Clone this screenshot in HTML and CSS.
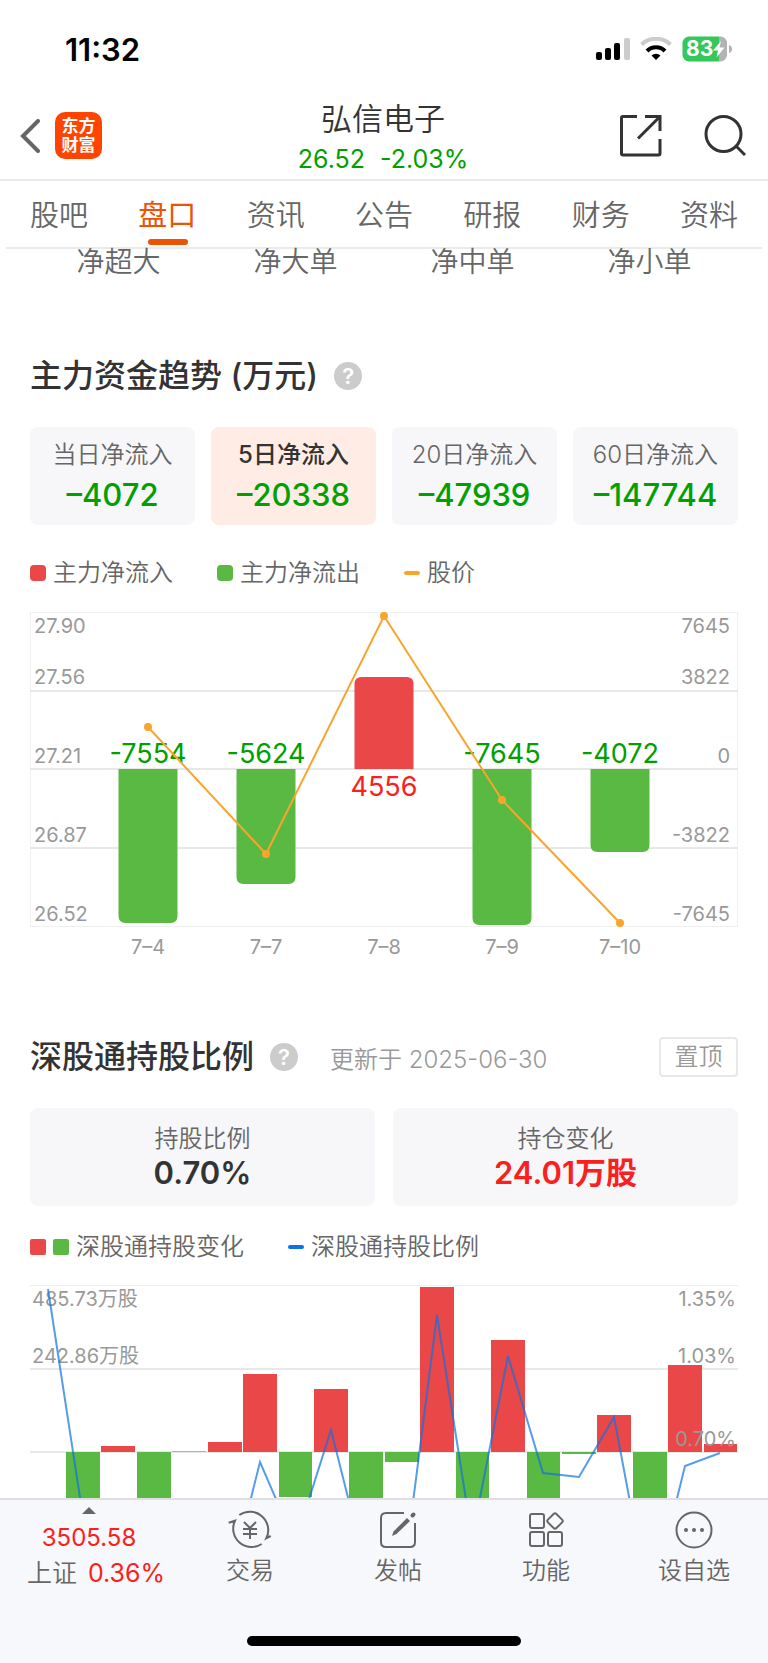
FILE: index.html
```html
<!DOCTYPE html>
<html lang="zh-CN">
<head>
    <meta charset="UTF-8">
    <meta name="viewport" content="width=device-width, initial-scale=1.0">
    <title>弘信电子</title>
    <link rel="stylesheet" href="styles.css">
</head>
<body>
    <div class="status-bar">
        <span class="time">11:32</span>
        <div class="status-icons">
            <svg width="34" height="24" viewBox="0 0 34 24">
                <rect x="0" y="15" width="6" height="8" rx="2"/>
                <rect x="9" y="11" width="6" height="12" rx="2"/>
                <rect x="18" y="6" width="6" height="17" rx="2"/>
                <rect x="28" y="1" width="6" height="22" rx="2" fill="#ccc"/>
            </svg>
            <svg width="32" height="24" viewBox="0 0 32 24" fill="none" stroke-width="4">
                <path d="M1.500 7.500 A21 21 0 0 1 30.500 7.500" stroke="#ccc"/>
                <path d="M7 14 A12.500 12.500 0 0 1 25 14" stroke="#000"/>
                <path d="M16 23 L11.500 18.500 A6.500 6.500 0 0 1 20.500 18.500 Z" fill="#000"/>
            </svg>
            <svg width="50" height="26" viewBox="0 0 50 26">
                <path d="M7 0.500 H37 V25.500 H7 A6.500 6.500 0 0 1 0.500 19 V7 A6.500 6.500 0 0 1 7 0.500 Z" fill="#34c759"/>
                <path d="M37 0.500 H38.500 A6.500 6.500 0 0 1 45 7 V19 A6.500 6.500 0 0 1 38.500 25.500 H37 Z" fill="#b3b3b3"/>
                <path d="M47 9 Q50 10 50 13 Q50 16 47 17 Z" fill="#b3b3b3"/>
                <text x="4" y="20" class="battery-text">83</text>
                <path d="M39 5 L31 14.500 H36 L34.500 21.500 L42.500 11.500 H37.500 Z" fill="#fff"/>
            </svg>
        </div>
    </div>

    <header class="header">
        <div class="header-left">
            <button class="icon-btn" aria-label="返回">
                <svg width="20" height="34" viewBox="0 0 20 34" fill="none" stroke="#666" stroke-width="4" stroke-linecap="round">
                    <path d="M18 2 L3 17 L18 32"/>
                </svg>
            </button>
            <a href="#" class="logo"><span>东方</span><span>财富</span></a>
        </div>
        <div class="stock">
            <h1>弘信电子</h1>
            <div class="quote"><span>26.52</span><span>-2.03%</span></div>
        </div>
        <div class="header-right">
            <button class="icon-btn" aria-label="分享">
                <svg width="42" height="42" viewBox="0 0 42 42" fill="none" stroke="#333" stroke-width="3">
                    <path d="M17 1.500 H3 Q1.500 1.500 1.500 3 V38.500 Q1.500 40 3 40 H38.500 Q40 40 40 38.500 V24"/>
                    <path d="M25 1.500 H40 V16"/>
                    <path d="M40 1.500 L18 23.500"/>
                </svg>
            </button>
            <button class="icon-btn" aria-label="搜索">
                <svg width="42" height="42" viewBox="0 0 42 42" fill="none" stroke="#333" stroke-width="3">
                    <circle cx="19.500" cy="19" r="17.500"/>
                    <path d="M32 31 L41 40"/>
                </svg>
            </button>
        </div>
    </header>

    <nav class="tabs">
        <a href="#">股吧</a>
        <a href="#" class="active">盘口</a>
        <a href="#">资讯</a>
        <a href="#">公告</a>
        <a href="#">研报</a>
        <a href="#">财务</a>
        <a href="#">资料</a>
    </nav>

    <div class="order-types">
        <span>净超大</span>
        <span>净大单</span>
        <span>净中单</span>
        <span>净小单</span>
    </div>

    <main class="content">
        <section class="trend">
            <div class="section-title">
                <h2>主力资金趋势 (万元)</h2>
                <button class="help" aria-label="说明">?</button>
            </div>
            <div class="periods">
                <button class="period"><span>当日净流入</span><b>–4072</b></button>
                <button class="period active"><span>5日净流入</span><b>–20338</b></button>
                <button class="period"><span>20日净流入</span><b>–47939</b></button>
                <button class="period"><span>60日净流入</span><b>–147744</b></button>
            </div>
            <div class="legend">
                <span class="legend-item"><i class="swatch round red"></i>主力净流入</span>
                <span class="legend-item"><i class="swatch round green"></i>主力净流出</span>
                <span class="legend-item"><i class="dash orange"></i>股价</span>
            </div>
            <svg class="chart" viewBox="0 0 708 350">
                <g class="frame">
                    <path d="M0.500 0 V314 M707.500 0 V314"/>
                    <path d="M0 0.500 H708 M0 314.500 H708"/>
                </g>
                <g class="grid">
                    <path d="M0 79 H708 M0 157 H708 M0 236 H708"/>
                </g>
                <g class="bar-down">
                    <path d="M88.500 157 H147.500 V304 Q147.500 311 140.500 311 H95.500 Q88.500 311 88.500 304 Z"/>
                    <path d="M206.500 157 H265.500 V265 Q265.500 272 258.500 272 H213.500 Q206.500 272 206.500 265 Z"/>
                    <path d="M442.500 157 H501.500 V306 Q501.500 313 494.500 313 H449.500 Q442.500 313 442.500 306 Z"/>
                    <path d="M560.500 157 H619.500 V233 Q619.500 240 612.500 240 H567.500 Q560.500 240 560.500 233 Z"/>
                </g>
                <path class="bar-up" d="M324.500 157 V72 Q324.500 65 331.500 65 H376.500 Q383.500 65 383.500 72 V157 Z"/>
                <g class="axis">
                    <text x="4" y="21">27.90</text>
                    <text x="4" y="72">27.56</text>
                    <text x="4" y="151">27.21</text>
                    <text x="4" y="230">26.87</text>
                    <text x="4" y="309">26.52</text>
                </g>
                <g class="axis end">
                    <text x="700" y="21">7645</text>
                    <text x="700" y="72">3822</text>
                    <text x="700" y="151">0</text>
                    <text x="700" y="230">-3822</text>
                    <text x="700" y="309">-7645</text>
                </g>
                <g class="axis middle">
                    <text x="118" y="342">7–4</text>
                    <text x="236" y="342">7–7</text>
                    <text x="354" y="342">7–8</text>
                    <text x="472" y="342">7–9</text>
                    <text x="590" y="342">7–10</text>
                </g>
                <g class="value">
                    <text x="118" y="151">-7554</text>
                    <text x="236" y="151">-5624</text>
                    <text x="354" y="184" class="up">4556</text>
                    <text x="472" y="151">-7645</text>
                    <text x="590" y="151">-4072</text>
                </g>
                <polyline class="price-line" points="118,115 236,242 354,4 472,188 590,311"/>
                <g fill="#f9a52b">
                    <circle cx="118" cy="115" r="4"/>
                    <circle cx="236" cy="242" r="4"/>
                    <circle cx="354" cy="4" r="4"/>
                    <circle cx="472" cy="188" r="4"/>
                    <circle cx="590" cy="311" r="4"/>
                </g>
            </svg>
        </section>

        <section class="holding">
            <div class="section-title">
                <h2>深股通持股比例</h2>
                <button class="help" aria-label="说明">?</button>
                <span class="updated">更新于 2025-06-30</span>
                <button class="pin">置顶</button>
            </div>
            <div class="stats">
                <div class="stat"><span>持股比例</span><b>0.70%</b></div>
                <div class="stat"><span>持仓变化</span><b class="up">24.01万股</b></div>
            </div>
            <div class="legend">
                <span class="legend-item"><i class="swatch red"></i><i class="swatch green"></i>深股通持股变化</span>
                <span class="legend-item"><i class="dash blue"></i>深股通持股比例</span>
            </div>
            <svg class="chart" viewBox="0 0 708 335">
                <g class="frame">
                    <path d="M0 0.500 H708 M0 334 H708"/>
                </g>
                <g class="grid">
                    <path d="M0 84 H708 M0 167 H708 M0 251 H708"/>
                </g>
                <g class="bar-down">
                    <rect x="36" y="167" width="34" height="130"/>
                    <rect x="107" y="167" width="34" height="110"/>
                    <rect x="249" y="167" width="33" height="45"/>
                    <rect x="319" y="167" width="34" height="120"/>
                    <rect x="355" y="167" width="34" height="10"/>
                    <rect x="426" y="167" width="33" height="90"/>
                    <rect x="497" y="167" width="33" height="70"/>
                    <rect x="532" y="167" width="34" height="2"/>
                    <rect x="603" y="167" width="34" height="140"/>
                </g>
                <g class="bar-up">
                    <rect x="71" y="161" width="34" height="6"/>
                    <rect x="142" y="166" width="34" height="1" opacity="0.500"/>
                    <rect x="178" y="157" width="34" height="10"/>
                    <rect x="213" y="89" width="34" height="78"/>
                    <rect x="284" y="104" width="34" height="63"/>
                    <rect x="390" y="2" width="34" height="165"/>
                    <rect x="461" y="55" width="34" height="112"/>
                    <rect x="567" y="130" width="34" height="37"/>
                    <rect x="638" y="80" width="34" height="87"/>
                    <rect x="674" y="159" width="33" height="8"/>
                </g>
                <g class="axis">
                    <text x="2" y="21">485.73万股</text>
                    <text x="2" y="78">242.86万股</text>
                </g>
                <g class="axis end">
                    <text x="706" y="21">1.35%</text>
                    <text x="706" y="78">1.03%</text>
                    <text x="706" y="161">0.70%</text>
                </g>
                <polyline class="ratio-line" points="18,4 53,232 88,310 124,290 159,300 195,317 230,177 265,258 301,145 336,284 372,303 407,30 442,253 478,71 513,188 549,192 584,132 620,323 655,181 690,168"/>
            </svg>
        </section>
    </main>

    <footer class="toolbar">
        <a href="#" class="index">
            <i class="arrow-up"></i>
            <span class="index-value">3505.58</span>
            <span class="index-row">上证<b>0.36%</b></span>
        </a>
        <a href="#" class="tool">
            <svg width="44" height="40" viewBox="0 0 44 40" fill="none" stroke="#666" stroke-width="2">
                <path d="M11.300 5 A18.400 18.400 0 0 1 38.300 28.300 L42.700 26"/>
                <path d="M33.700 34 A18.400 18.400 0 0 1 7 10.700 L0.700 12.700"/>
                <path d="M16 12 L22 18 L28 12 M22 18 V29 M15 19 H29 M15 24 H29"/>
            </svg>
            <span>交易</span>
        </a>
        <a href="#" class="tool">
            <svg width="40" height="40" viewBox="0 0 40 40" fill="none" stroke="#666" stroke-width="2">
                <path d="M26 3 H8 Q3 3 3 8 V32 Q3 37 8 37 H32 Q37 37 37 32 V13"/>
                <path d="M14 26 L15.500 21.500 L29 8 L32 11 L18.500 24 Z" fill="#666" stroke="none"/>
                <path d="M34.500 5.500 L35.500 4.500" stroke-width="4" stroke-linecap="round"/>
            </svg>
            <span>发帖</span>
        </a>
        <a href="#" class="tool">
            <svg width="40" height="40" viewBox="0 0 40 40" fill="none" stroke="#666" stroke-width="2">
                <rect x="4" y="4" width="14" height="14" rx="2"/>
                <rect x="4" y="22" width="14" height="14" rx="2"/>
                <rect x="22" y="22" width="14" height="14" rx="2"/>
                <rect x="23" y="5" width="12" height="12" rx="2" transform="rotate(45 29 11)"/>
            </svg>
            <span>功能</span>
        </a>
        <a href="#" class="tool">
            <svg width="40" height="40" viewBox="0 0 40 40" fill="none" stroke="#666" stroke-width="2">
                <circle cx="20" cy="20" r="17.500"/>
                <g fill="#666" stroke="none">
                    <circle cx="12" cy="20" r="2"/>
                    <circle cx="20" cy="20" r="2"/>
                    <circle cx="28" cy="20" r="2"/>
                </g>
            </svg>
            <span>设自选</span>
        </a>
        <div class="home-indicator"></div>
    </footer>
</body>
</html>
```
FILE: styles.css
```css
* {
    box-sizing: border-box;
    margin: 0;
    padding: 0;
}
body {
    display: flex;
    flex-direction: column;
    height: 100vh;
    font-family: Inter, 'Noto Sans CJK SC', sans-serif;
    font-size: 24px;
    font-weight: 350;
    color: #666;
    background-color: #fff;
}
a {
    color: inherit;
    text-decoration: none;
}
button {
    font: inherit;
    color: inherit;
    background: none;
    border: none;
    cursor: pointer;
}
svg {
    display: block;
}

/* Status bar */
.status-bar {
    display: flex;
    justify-content: space-between;
    align-items: center;
    height: 98px;
    padding: 0 36px 0 65px;
    flex-shrink: 0;
}
.time {
    font-size: 31px;
    font-weight: 600;
    color: #000;
}
.status-icons {
    display: flex;
    align-items: center;
    gap: 10px;
}
.battery-text {
    font-size: 21px;
    font-weight: 700;
    fill: #fff;
}

/* Header */
.header {
    display: grid;
    grid-template-columns: 1fr auto 1fr;
    align-items: center;
    height: 83px;
    padding: 0 22px 0 20px;
    border-bottom: 2px solid #ebebeb;
    flex-shrink: 0;
}
.header-left,
.header-right {
    display: flex;
    align-items: center;
    padding-bottom: 6px;
}
.header-left {
    gap: 15px;
}
.header-right {
    justify-content: flex-end;
    gap: 42px;
}
.logo {
    display: flex;
    flex-direction: column;
    align-items: center;
    justify-content: center;
    width: 47px;
    height: 47px;
    border-radius: 10px;
    background-color: #ff4400;
    color: #fff;
    font-size: 17px;
    font-weight: 700;
    line-height: 19px;
}
.stock {
    text-align: center;
}
h1 {
    font-size: 31px;
    font-weight: 350;
    line-height: 40px;
    color: #333;
}
.quote {
    display: flex;
    justify-content: center;
    gap: 15px;
    font-size: 25px;
    font-weight: 400;
    line-height: 40px;
    color: #00a000;
}

/* Tabs */
.tabs {
    display: flex;
    justify-content: space-between;
    height: 68px;
    margin: 0 6px;
    padding: 0 24px;
    border-bottom: 2px solid #ebebeb;
    flex-shrink: 0;
}
.tabs a {
    position: relative;
    font-size: 29px;
    line-height: 70px;
}
.tabs .active {
    color: #ea5504;
    font-weight: 400;
}
.tabs .active::after {
    content: '';
    position: absolute;
    left: 10px;
    right: 8px;
    bottom: 2px;
    height: 6px;
    border-radius: 3px;
    background-color: #ea5504;
}

/* Content */
.order-types {
    display: grid;
    grid-template-columns: repeat(4, 1fr);
    padding: 0 30px;
    text-align: center;
    font-size: 28px;
    line-height: 26px;
    flex-shrink: 0;
}
.content {
    flex: 1;
    min-height: 0;
    overflow-y: auto;
    scrollbar-width: none;
    padding: 0 30px;
}
.section-title {
    display: flex;
    align-items: center;
    height: 40px;
}
h2 {
    font-size: 32px;
    font-weight: 500;
    line-height: 40px;
    color: #333;
}
.help {
    width: 28px;
    height: 28px;
    margin-left: 16px;
    border-radius: 50%;
    background-color: #ccc;
    color: #fff;
    font-size: 22px;
    font-weight: 600;
    line-height: 28px;
}
.trend {
    margin-top: 81px;
}
.periods {
    display: grid;
    grid-template-columns: repeat(4, 1fr);
    gap: 16px;
    margin-top: 31px;
}
.period,
.stat {
    display: flex;
    flex-direction: column;
    align-items: center;
    height: 98px;
    border-radius: 8px;
    background-color: #f7f7fa;
}
.period {
    padding-top: 9px;
}
.period span {
    line-height: 38px;
}
.period b {
    font-size: 31px;
    font-weight: 500;
    line-height: 42px;
    color: #00a000;
}
.period.active {
    background-color: #ffede5;
}
.period.active span {
    font-weight: 500;
    color: #333;
}
.legend {
    display: flex;
    align-items: center;
    gap: 44px;
}
.legend-item {
    display: flex;
    align-items: center;
    gap: 7px;
    line-height: 36px;
}
.trend .legend {
    margin: 30px 0 21px;
}
.swatch {
    width: 16px;
    height: 16px;
    border-radius: 2px;
}
.swatch.round {
    border-radius: 4px;
}
.dash {
    width: 16px;
    height: 4px;
    border-radius: 2px;
}
.red {
    background-color: #ea4748;
}
.green {
    background-color: #5ab943;
}
.orange {
    background-color: #f9a52b;
}
.blue {
    background-color: #0d72e2;
}

/* Charts */
.chart {
    width: 100%;
    height: auto;
}
.frame path,
.grid path {
    fill: none;
    stroke: #efefef;
}
.grid path {
    stroke: #e8e8e8;
    stroke-width: 2;
}
.bar-up {
    fill: #ea4748;
}
.bar-down {
    fill: #5ab943;
}
.axis {
    font-size: 20px;
    font-weight: 400;
    fill: #999;
}
.end {
    text-anchor: end;
}
.middle {
    text-anchor: middle;
}
.value {
    font-size: 27px;
    font-weight: 400;
    text-anchor: middle;
    fill: #00a000;
}
.value .up {
    fill: #fb2020;
}
.price-line {
    fill: none;
    stroke: #f9a52b;
    stroke-width: 2;
}
.ratio-line {
    fill: none;
    stroke: #0d72e2;
    stroke-width: 2;
    opacity: 0.7;
}

/* Holding ratio */
.holding {
    margin-top: 75px;
}
.updated {
    margin-left: 32px;
    color: #999;
}
.pin {
    width: 79px;
    height: 40px;
    margin-left: auto;
    border: 2px solid #e8e8ec;
    border-radius: 4px;
    color: #999;
    line-height: 36px;
}
.stats {
    display: grid;
    grid-template-columns: 1fr 1fr;
    gap: 18px;
    margin-top: 31px;
}
.stat {
    padding-top: 15px;
}
.stat span {
    line-height: 32px;
}
.stat b {
    font-size: 31px;
    font-weight: 600;
    line-height: 36px;
    color: #333;
}
.stat .up {
    color: #fb2020;
}
.holding .legend {
    margin: 23px 0 20px;
}

/* Bottom toolbar */
.toolbar {
    display: grid;
    grid-template-columns: 176px repeat(4, 1fr);
    height: 165px;
    flex-shrink: 0;
    position: relative;
    border-top: 2px solid #dedee3;
    background-color: #f7f8fb;
}
.index,
.tool {
    display: flex;
    flex-direction: column;
    align-items: center;
}
.index {
    padding: 7px 0 0 16px;
}
.arrow-up {
    margin-right: 14px;
    border: 7px solid transparent;
    border-top: none;
    border-bottom-color: #666;
}
.index-value,
.index b {
    font-weight: 400;
    color: #fb2020;
}
.index-value {
    margin: 6px 14px 0 0;
    line-height: 36px;
}
.index-row {
    display: flex;
    gap: 11px;
    font-size: 25px;
    line-height: 34px;
}
.tool {
    padding-top: 10px;
}
.tool span {
    margin-top: 4px;
    line-height: 34px;
}
.home-indicator {
    position: absolute;
    left: 50%;
    bottom: 17px;
    width: 274px;
    height: 10px;
    margin-left: -137px;
    border-radius: 5px;
    background-color: #000;
}
```
